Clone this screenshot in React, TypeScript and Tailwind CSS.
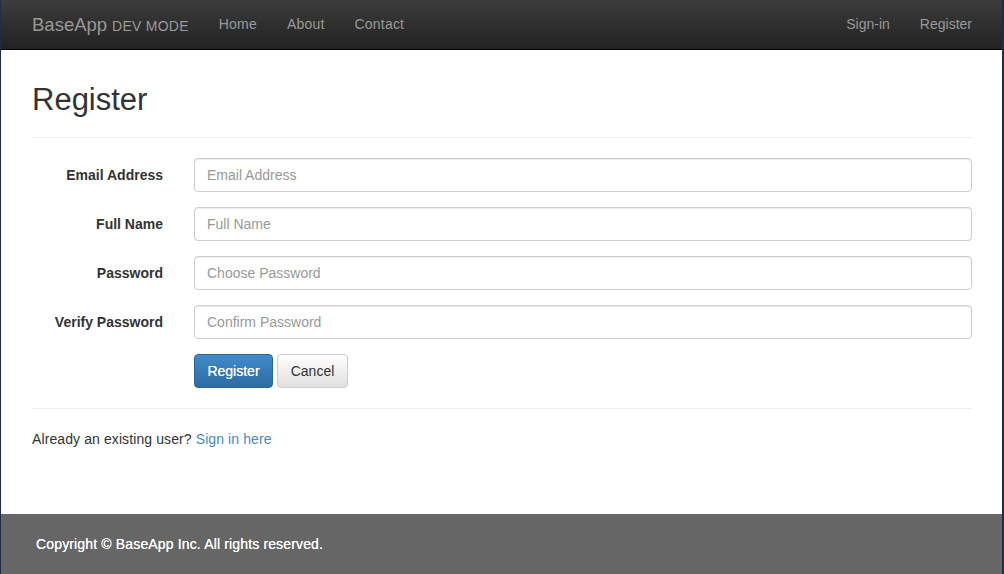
import React from "react";

const font = { fontFamily: '"Liberation Sans", Arial, Helvetica, sans-serif' };

function Field({ label, placeholder, type = "text" }: { label: string; placeholder: string; type?: string }) {
  return (
    <div className="flex items-center">
      <label className="w-[131px] shrink-0 text-right text-[14px] font-bold text-[#333]">{label}</label>
      <input
        type={type}
        placeholder={placeholder}
        className="ml-[31px] h-[34px] flex-1 rounded-[4px] border border-[#cccccc] bg-white px-[12px] text-[14px] text-[#555] placeholder:text-[#999] shadow-[inset_0_1px_1px_rgba(0,0,0,0.075)] outline-none"
      />
    </div>
  );
}

export default function App() {
  return (
    <div style={font} className="flex h-[574px] w-[1004px] flex-col overflow-hidden border-l border-r-2 border-[#1d2c47] bg-white text-[14px] text-[#333]">
      <nav className="flex h-[50px] shrink-0 items-center border-b border-black bg-gradient-to-b from-[#3c3c3c] to-[#222222] pl-[31px] pr-[30px]">
        <div className="flex items-baseline text-[#999]">
          <span className="text-[18.5px]">BaseApp</span>
          <span className="ml-[5px] text-[14px] tracking-[0.25px]">DEV MODE</span>
        </div>
        <div className="ml-[30px] flex gap-[30px] text-[14px] tracking-[0.2px] text-[#999]">
          <span>Home</span>
          <span>About</span>
          <span>Contact</span>
        </div>
        <div className="ml-auto flex gap-[30px] text-[14px] text-[#999]">
          <span>Sign-in</span>
          <span>Register</span>
        </div>
      </nav>
      <main className="flex-1 pl-[31px] pr-[30px]">
        <div className="mt-[33px] border-b border-[#eeeeee] pb-[20px]">
          <h1 className="text-[31px] leading-[34px] font-normal text-[#333]">Register</h1>
        </div>
        <div className="mt-[20px] flex flex-col gap-[15px]">
          <Field label="Email Address" placeholder="Email Address" />
          <Field label="Full Name" placeholder="Full Name" />
          <Field label="Password" placeholder="Choose Password" type="password" />
          <Field label="Verify Password" placeholder="Confirm Password" type="password" />
          <div className="flex gap-[4px] pl-[162px]">
            <button className="h-[34px] w-[79px] rounded-[4px] border border-[#2b669a] bg-gradient-to-b from-[#428bca] to-[#2d6ca2] text-[14px] text-white [text-shadow:0_0_0.4px_white]">
              Register
            </button>
            <button className="h-[34px] w-[71px] rounded-[4px] border border-[#cccccc] bg-gradient-to-b from-white to-[#e0e0e0] text-[14px] text-[#333]">
              Cancel
            </button>
          </div>
        </div>
        <div className="mt-[20px] border-t border-[#eeeeee] pt-[20px] leading-[20px] tracking-[0.1px]">
          Already an existing user? <span className="text-[#428bca]">Sign in here</span>
        </div>
      </main>
      <footer className="flex h-[60px] shrink-0 items-center bg-[#666666] pl-[35px] text-[14px] font-normal tracking-[0.15px] text-white [text-shadow:0_0_0.6px_white]">
        Copyright © BaseApp Inc. All rights reserved.
      </footer>
    </div>
  );
}
